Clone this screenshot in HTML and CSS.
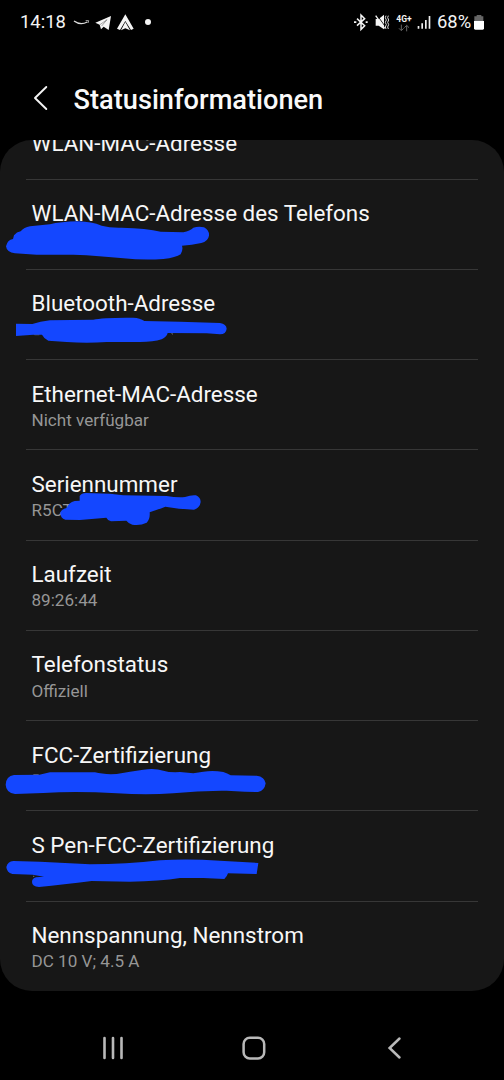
FILE: index.html
```html
<!DOCTYPE html>
<html lang="de">
<head>
<meta charset="utf-8">
<title>Statusinformationen</title>
<link rel="stylesheet" href="styles.css">
</head>
<body>
<div class="phone">
  <div class="statusbar">
    <div class="status-left">
      <span class="clock">14:18</span>
      <svg class="i-smile" width="17" height="20" viewBox="0 0 51 60"><path d="M3 27Q22 41 43 30" fill="none" stroke="#ddd" stroke-width="4"/><path d="M38 26h9l-2 7" fill="none" stroke="#ccc" stroke-width="2.5"/></svg>
      <svg class="i-plane" width="17" height="20" viewBox="0 0 51 60"><path d="M1 32L48 12 41 54 26 44 18 52 14 38z" fill="#f4f4f4"/><path d="M15 38L36 23 20 42" fill="none" stroke="#444" stroke-width="1.4"/></svg>
      <svg class="i-tri" width="17" height="20" viewBox="0 0 51 60"><path d="M25 7L50 50 42 54 25 27 9 54 0 50z" fill="#f4f4f4"/><path d="M25 30L39 55 25 49 12 55z" fill="#f4f4f4"/></svg>
      <span class="dot"></span>
    </div>
    <div class="status-right">
      <svg width="14" height="20" viewBox="0 0 42 60"><path d="M9 20L32 41 21 52V9L32 20 9 41" fill="none" stroke="#f4f4f4" stroke-width="4.5"/><path d="M0 28h7v5H0zM35 28h6v5h-6z" fill="#f4f4f4"/></svg>
      <svg class="i-mute" width="15" height="20" viewBox="0 0 45 60"><path d="M2 21h9L27 8v44L11 41H2z" fill="#f4f4f4"/><path d="M6 9L33 47" stroke="#000" stroke-width="2.5"/><path d="M2 11L29 49" stroke="#f4f4f4" stroke-width="4"/><path d="M33 11l-2 6 3 7-3 7 3 7-3 7 2 6M40 11l-2 6 3 7-3 7 3 7-3 7 2 6" fill="none" stroke="#ddd" stroke-width="3"/></svg>
      <span class="network"><b>4G+</b><svg width="12" height="8" viewBox="0 0 36 24"><path d="M10 2v17M3 13l7 7 7-7M26 22V5M19 11l7-7 7 7" fill="none" stroke="#666" stroke-width="3"/></svg></span>
      <svg class="i-signal" width="14" height="20" viewBox="0 0 42 60"><path d="M2 42h5v8H2zM13 34h5v16h-5zM24 24h5v26h-5zM35 12h5v38h-5z" fill="#eee"/></svg>
      <span class="percent">68%</span>
      <svg class="i-battery" width="10" height="20" viewBox="0 0 30 60"><path d="M8 9h14v4h6v14H1V13h7z" fill="#666"/><path d="M0 27h30v22q0 4-4 4H4q-4 0-4-4z" fill="#fff"/></svg>
    </div>
  </div>

  <header class="appbar">
    <svg class="back" width="15" height="26" viewBox="0 0 15 26"><path d="M13.3 2L2 13 13.3 24" fill="none" stroke="#f4f4f4" stroke-width="1.9" stroke-linecap="round" stroke-linejoin="round"/></svg>
    <h1 class="title">Statusinformationen</h1>
  </header>

  <main class="card">
    <ul class="list">
      <li class="row row-scrolled"><div class="name">WLAN-MAC-Adresse</div></li>
      <li class="row"><div class="name">WLAN-MAC-Adresse des Telefons</div>
        <svg class="mark" viewBox="0 0 870 270"><path d="M42 136Q50 126 62 124Q72 112 90 109L150 103Q180 95 235 94Q275 95 305 107Q330 114 365 113Q440 115 482 125L550 127Q570 122 580 113Q596 108 612 112Q628 120 627 137Q624 154 604 159Q575 165 546 167Q550 180 542 193Q528 203 490 207Q430 211 370 205Q300 197 220 194L110 194 45 190Q20 187 18 169Q22 150 39 147z"/></svg></li>
      <li class="row"><div class="name">Bluetooth-Adresse</div>
        <svg class="mark" viewBox="0 0 870 270"><path class="trace" d="M100 163h18v3h-14zM513 159l5-1 1 8-3-3z"/><path d="M48 131L97 132Q120 124 150 121L280 119Q310 112 400 113Q420 114 433 123L540 125 660 129Q679 132 680 146Q678 163 660 163L620 160 503 159Q500 171 485 178Q460 186 420 186L320 186Q260 191 200 186L145 182Q132 176 126 164L100 164 48 168z"/></svg></li>
      <li class="row"><div class="name">Ethernet-MAC-Adresse</div><div class="value">Nicht verfügbar</div></li>
      <li class="row"><div class="name">Seriennummer</div><div class="value">R5CT</div>
        <svg class="mark" viewBox="0 0 870 270"><path d="M239 108Q244 99 258 99L330 101 370 106 500 108Q530 113 555 111Q575 104 588 106Q602 112 602 126Q600 143 582 149Q535 147 496 140Q475 148 449 157Q451 176 440 188Q420 198 397 194Q385 190 379 182L333 184Q322 180 319 173L240 180 196 179Q180 174 181 158Q184 148 200 144Q206 127 224 123L239 122z"/></svg></li>
      <li class="row"><div class="name">Laufzeit</div><div class="value">89:26:44</div></li>
      <li class="row"><div class="name">Telefonstatus</div><div class="value">Offiziell</div></li>
      <li class="row"><div class="name">FCC-Zertifizierung</div>
        <svg class="mark mark-low" viewBox="0 0 870 270"><path class="trace" d="M100 132h16v3h-16z"/><path d="M42 135L118 134 150 127 285 127Q310 134 350 132Q390 124 430 119Q465 114 490 122Q510 128 540 126L580 130 610 125Q640 121 670 126Q682 130 692 136L770 137Q794 140 797 160Q794 182 774 186L735 185 680 182Q600 181 520 190Q440 196 350 190Q230 183 130 189L45 192Q18 188 17 164Q18 139 42 135z"/></svg></li>
      <li class="row"><div class="name">S Pen-FCC-Zertifizierung</div>
        <svg class="mark mark-low" viewBox="0 0 870 270"><path class="trace" d="M99 167h4v4h-4z"/><path d="M40 123L120 125 270 133Q380 133 480 121Q560 116 660 122L775 129 770 162 684 160Q681 170 673 177L610 174 540 174Q480 184 390 185L275 183Q190 194 117 201Q96 199 96 186Q96 175 108 172L132 170 98 164 37 162Q20 157 19 141Q23 125 40 123z"/></svg></li>
      <li class="row"><div class="name">Nennspannung, Nennstrom</div><div class="value">DC 10 V; 4.5 A</div></li>
    </ul>
  </main>

  <nav class="navbar">
    <svg width="24" height="24" viewBox="0 0 24 24"><path d="M3.5 2v20M12 2v20M20.5 2v20" stroke="#b9b9b9" stroke-width="2.6" stroke-linecap="round"/></svg>
    <svg width="24" height="24" viewBox="0 0 24 24"><rect x="1.6" y="1.8" width="20.6" height="20.6" rx="6.2" fill="none" stroke="#b9b9b9" stroke-width="2.5"/></svg>
    <svg width="24" height="24" viewBox="0 0 24 24"><path d="M16.5 2.5L6.6 12l9.9 9.5" fill="none" stroke="#b9b9b9" stroke-width="2.5" stroke-linecap="round"/></svg>
  </nav>
</div>
</body>
</html>
```
FILE: styles.css
```css
* { box-sizing: border-box; }
body { margin: 0; background: #000; font-family: Roboto, "Noto Sans", sans-serif; }
.phone { width: 504px; height: 1080px; background: #000; overflow: hidden; display: flex; flex-direction: column; }
svg { display: block; flex: none; }

.statusbar { height: 44px; padding: 0 20px; display: flex; justify-content: space-between; align-items: center; color: #f4f4f4; }
.status-left, .status-right { display: flex; align-items: center; height: 20px; }
.clock, .percent { font-size: 18.4px; line-height: 20px; }
.clock { width: 46px; }
.i-smile { margin-left: 7px; }
.i-plane { margin-left: 5px; }
.i-tri { margin-left: 5px; }
.dot { width: 6px; height: 6px; margin-left: 11px; border-radius: 50%; background: #f4f4f4; }
.i-mute { margin-left: 7px; }
.network { width: 16px; height: 20px; margin-left: 6px; padding-top: 3px; display: flex; flex-direction: column; align-items: center; }
.network b { font-size: 8.5px; line-height: 9px; }
.i-signal { margin-left: 5px; }
.percent { width: 34px; margin-left: 6px; }
.i-battery { margin-left: 3px; }

.appbar { height: 96px; padding: 12px 33px 0; display: flex; align-items: flex-start; }
.back { margin-top: 29px; }
.title { margin: 28px 0 0 25.6px; font-size: 27.2px; line-height: 32px; font-weight: 500; color: #f9f9f9; white-space: nowrap; }

.card { height: 850.5px; flex: none; border-radius: 32px; background: #171717; overflow: hidden; }
.list { list-style: none; margin: 0; padding: 0; }
.row { position: relative; height: 90.25px; padding: 19.4px 31.5px 0; }
.row-scrolled { display: flex; align-items: flex-start; height: 39.7px; padding-top: 0; }
.row-scrolled .name { margin-top: -11px; }
.row::after { content: ""; position: absolute; left: 26px; right: 26px; bottom: 0; height: 1px; background: #373737; }
.row:last-child::after { display: none; }
.name { font-size: 22.42px; line-height: 28px; color: #f7f7f7; white-space: nowrap; }
.value { margin-top: 1.2px; font-size: 17.1px; line-height: 22px; color: #969696; white-space: nowrap; }
.mark { position: absolute; left: 0; top: 10px; width: 290px; height: 90px; fill: #1447ff; }
.mark-low { top: 8.7px; }
.trace { fill: #5c5c5c; }

.navbar { flex: 1; padding: 25px 97px 0 101px; display: flex; justify-content: space-between; align-items: center; }
```
